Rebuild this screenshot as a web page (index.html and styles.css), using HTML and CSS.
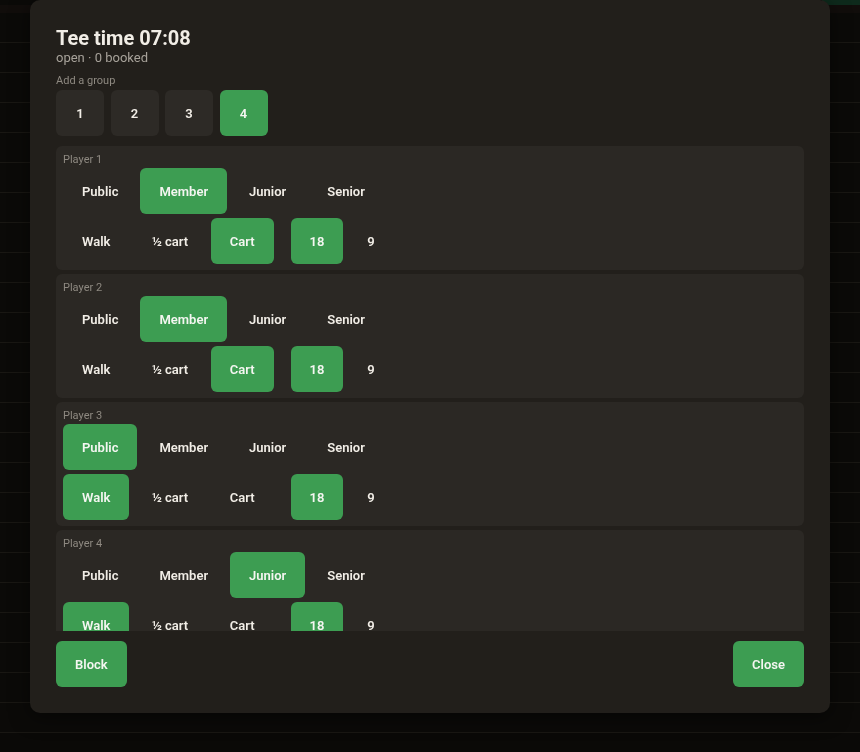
FILE: index.html
```html
<!DOCTYPE html>
<html lang="en">
<head>
<meta charset="utf-8">
<title>Tee time 07:08</title>
<link rel="stylesheet" href="styles.css">
</head>
<body>
<div class="backdrop">
  <div class="topbar"></div>
  <div class="bg-row"></div><div class="bg-row"></div><div class="bg-row"></div><div class="bg-row"></div>
  <div class="bg-row"></div><div class="bg-row"></div><div class="bg-row"></div><div class="bg-row"></div>
  <div class="bg-row"></div><div class="bg-row"></div><div class="bg-row"></div><div class="bg-row"></div>
  <div class="bg-row"></div><div class="bg-row"></div><div class="bg-row"></div><div class="bg-row"></div>
  <div class="bg-row"></div><div class="bg-row"></div><div class="bg-row"></div><div class="bg-row"></div>
  <div class="bg-row"></div><div class="bg-row"></div><div class="bg-row"></div><div class="bg-row"></div>
</div>
<div class="overlay">
  <div class="modal">
    <h1 class="title">Tee time 07:08</h1>
    <div class="subtitle">open · 0 booked</div>
    <div class="label">Add a group</div>
    <div class="groups">
      <button class="gbtn">1</button>
      <button class="gbtn">2</button>
      <button class="gbtn">3</button>
      <button class="gbtn on">4</button>
    </div>
    <div class="list">
      <div class="card">
        <div class="plabel">Player 1</div>
        <div class="row">
          <button class="opt">Public</button>
          <button class="opt on">Member</button>
          <button class="opt">Junior</button>
          <button class="opt">Senior</button>
        </div>
        <div class="row split">
          <div class="seg">
            <button class="opt">Walk</button>
            <button class="opt">½ cart</button>
            <button class="opt on">Cart</button>
          </div>
          <div class="seg">
            <button class="opt on">18</button>
            <button class="opt">9</button>
          </div>
        </div>
      </div>
      <div class="card">
        <div class="plabel">Player 2</div>
        <div class="row">
          <button class="opt">Public</button>
          <button class="opt on">Member</button>
          <button class="opt">Junior</button>
          <button class="opt">Senior</button>
        </div>
        <div class="row split">
          <div class="seg">
            <button class="opt">Walk</button>
            <button class="opt">½ cart</button>
            <button class="opt on">Cart</button>
          </div>
          <div class="seg">
            <button class="opt on">18</button>
            <button class="opt">9</button>
          </div>
        </div>
      </div>
      <div class="card">
        <div class="plabel">Player 3</div>
        <div class="row">
          <button class="opt on">Public</button>
          <button class="opt">Member</button>
          <button class="opt">Junior</button>
          <button class="opt">Senior</button>
        </div>
        <div class="row split">
          <div class="seg">
            <button class="opt on">Walk</button>
            <button class="opt">½ cart</button>
            <button class="opt">Cart</button>
          </div>
          <div class="seg">
            <button class="opt on">18</button>
            <button class="opt">9</button>
          </div>
        </div>
      </div>
      <div class="card">
        <div class="plabel">Player 4</div>
        <div class="row">
          <button class="opt">Public</button>
          <button class="opt">Member</button>
          <button class="opt on">Junior</button>
          <button class="opt">Senior</button>
        </div>
        <div class="row split">
          <div class="seg">
            <button class="opt on">Walk</button>
            <button class="opt">½ cart</button>
            <button class="opt">Cart</button>
          </div>
          <div class="seg">
            <button class="opt on">18</button>
            <button class="opt">9</button>
          </div>
        </div>
      </div>
    </div>
    <div class="footer">
      <button class="fbtn">Block</button>
      <button class="fbtn">Close</button>
    </div>
  </div>
</div>
</body>
</html>
```
FILE: styles.css
```css
html, body {
  margin: 0;
  padding: 0;
  height: 100%;
  background: #0a0907;
  font-family: Roboto, "Noto Sans", "Liberation Sans", sans-serif;
  overflow: hidden;
}
.backdrop {
  display: flex;
  flex-direction: column;
}
.topbar {
  height: 5px;
  background: linear-gradient(to right, #0b0a08 0, #0b0a08 822px, #0e2a1c 822px);
  border-bottom: 8px solid #110d0b;
}
.bg-row {
  height: 29px;
  border-bottom: 1.5px solid #191713;
  background: #0b0a08;
}
.overlay {
  position: fixed;
  inset: 0;
  display: flex;
  justify-content: center;
  align-items: flex-start;
}
.modal {
  width: 800px;
  height: 713px;
  box-sizing: border-box;
  padding: 26px;
  background: #221f1b;
  border-radius: 10px;
  display: flex;
  flex-direction: column;
  box-shadow: 0 4px 20px rgba(0,0,0,0.5);
}
.title {
  margin: 0;
  font-size: 20px;
  line-height: 24px;
  font-weight: 700;
  color: #f1ede6;
}
.subtitle {
  font-size: 13px;
  line-height: 16px;
  color: #a7a29a;
}
.label {
  margin-top: 8px;
  font-size: 11px;
  line-height: 13px;
  color: #8e8981;
}
.groups {
  margin-top: 3px;
  display: flex;
  gap: 6.5px;
}
button {
  font-family: inherit;
  border: 0;
  cursor: pointer;
}
.gbtn {
  width: 48px;
  height: 46px;
  border-radius: 6px;
  background: #2d2a26;
  color: #f1ede6;
  font-size: 13px;
  font-weight: 600;
}
.gbtn.on, .opt.on, .fbtn {
  background: #3d9d52;
  color: #f4f6f1;
}
.list {
  margin-top: 10px;
  flex: 1;
  min-height: 0;
  overflow: hidden;
  display: flex;
  flex-direction: column;
  gap: 4px;
}
.card {
  flex: none;
  background: #2b2824;
  border-radius: 6px;
  padding: 7px 7px 6px;
  display: flex;
  flex-direction: column;
  gap: 4px;
}
.plabel {
  font-size: 11px;
  line-height: 13px;
  color: #8e8981;
  margin-bottom: -2px;
}
.row {
  display: flex;
  align-items: center;
  gap: 3px;
}
.row.split {
  gap: 17px;
}
.seg {
  display: flex;
  gap: 3.5px;
}
.opt {
  height: 46px;
  min-width: 48px;
  padding: 0 19px;
  border-radius: 6px;
  background: transparent;
  color: #f1ede6;
  font-size: 13px;
  font-weight: 600;
}
.footer {
  padding-top: 10px;
  display: flex;
  justify-content: space-between;
}
.fbtn {
  height: 46px;
  padding: 0 19px;
  border-radius: 6px;
  font-size: 13px;
  font-weight: 600;
}
```
